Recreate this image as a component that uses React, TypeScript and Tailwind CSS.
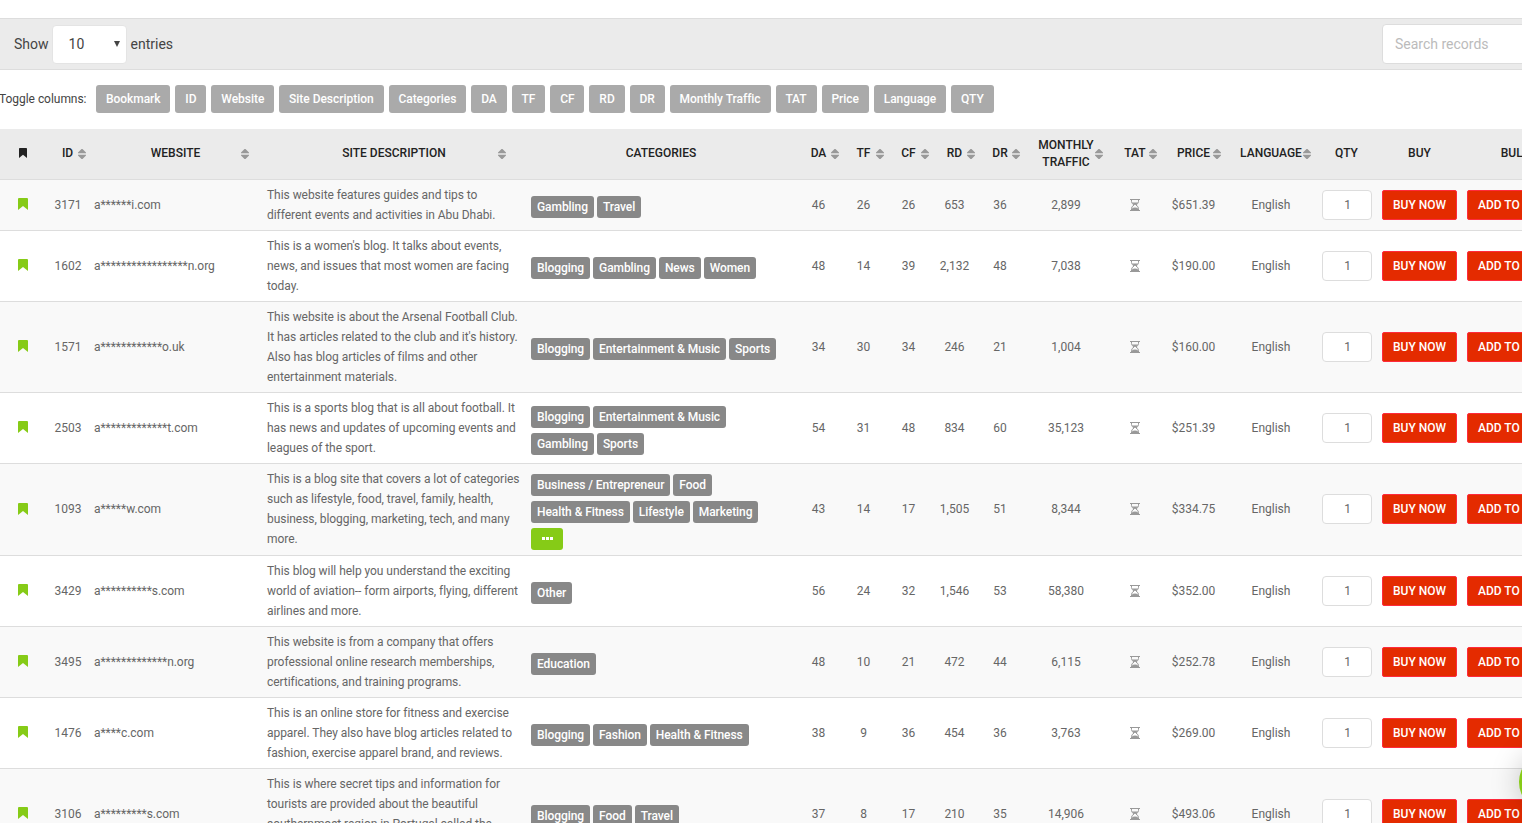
import React from 'react';

type Column = {
  label: string;
  width: string;
  sort?: string;
};

type Listing = {
  id: string;
  site: string;
  description: string[];
  tags: string[][];
  more?: boolean;
  stats: string[];
  price: string;
};

const toggles = ['Bookmark', 'ID', 'Website', 'Site Description', 'Categories', 'DA', 'TF', 'CF', 'RD', 'DR', 'Monthly Traffic', 'TAT', 'Price', 'Language', 'QTY'];

const columns: Column[] = [
  { label: 'ID', width: 'w-[43px]', sort: 'right-[3px]' },
  { label: 'WEBSITE', width: 'w-[173px]', sort: 'right-[13px]' },
  { label: 'SITE DESCRIPTION', width: 'w-[264px]', sort: 'right-[20px]' },
  { label: 'CATEGORIES', width: 'w-[270px]' },
  { label: 'DA', width: 'w-[45px]', sort: 'right-[2px]' },
  { label: 'TF', width: 'w-[45px]', sort: 'right-[2px]' },
  { label: 'CF', width: 'w-[45px]', sort: 'right-[2px]' },
  { label: 'RD', width: 'w-[47px]', sort: 'right-[3px]' },
  { label: 'DR', width: 'w-[44px]', sort: 'right-[2px]' },
  { label: 'MONTHLY TRAFFIC', width: 'w-[88px]', sort: 'right-[7px]' },
  { label: 'TAT', width: 'w-[50px]', sort: 'right-[3px]' },
  { label: 'PRICE', width: 'w-[67px]', sort: 'right-[6px]' },
  { label: 'LANGUAGE', width: 'w-[88px]', sort: 'right-[4px]' },
  { label: 'QTY', width: 'w-[63px]' },
  { label: 'BUY', width: 'w-[83px]' },
  { label: 'BULK', width: 'w-[109px]' },
];

const listings: Listing[] = [
  {
    id: '3171',
    site: 'a******i.com',
    description: ['This website features guides and tips to', 'different events and activities in Abu Dhabi.'],
    tags: [['Gambling', 'Travel']],
    stats: ['46', '26', '26', '653', '36', '2,899'],
    price: '$651.39',
  },
  {
    id: '1602',
    site: 'a*****************n.org',
    description: ["This is a women's blog. It talks about events,", 'news, and issues that most women are facing', 'today.'],
    tags: [['Blogging', 'Gambling', 'News', 'Women']],
    stats: ['48', '14', '39', '2,132', '48', '7,038'],
    price: '$190.00',
  },
  {
    id: '1571',
    site: 'a************o.uk',
    description: ['This website is about the Arsenal Football Club.', "It has articles related to the club and it's history.", 'Also has blog articles of films and other', 'entertainment materials.'],
    tags: [['Blogging', 'Entertainment & Music', 'Sports']],
    stats: ['34', '30', '34', '246', '21', '1,004'],
    price: '$160.00',
  },
  {
    id: '2503',
    site: 'a*************t.com',
    description: ['This is a sports blog that is all about football. It', 'has news and updates of upcoming events and', 'leagues of the sport.'],
    tags: [['Blogging', 'Entertainment & Music'], ['Gambling', 'Sports']],
    stats: ['54', '31', '48', '834', '60', '35,123'],
    price: '$251.39',
  },
  {
    id: '1093',
    site: 'a*****w.com',
    description: ['This is a blog site that covers a lot of categories', 'such as lifestyle, food, travel, family, health,', 'business, blogging, marketing, tech, and many', 'more.'],
    tags: [['Business / Entrepreneur', 'Food'], ['Health & Fitness', 'Lifestyle', 'Marketing']],
    more: true,
    stats: ['43', '14', '17', '1,505', '51', '8,344'],
    price: '$334.75',
  },
  {
    id: '3429',
    site: 'a**********s.com',
    description: ['This blog will help you understand the exciting', 'world of aviation-- form airports, flying, different', 'airlines and more.'],
    tags: [['Other']],
    stats: ['56', '24', '32', '1,546', '53', '58,380'],
    price: '$352.00',
  },
  {
    id: '3495',
    site: 'a*************n.org',
    description: ['This website is from a company that offers', 'professional online research memberships,', 'certifications, and training programs.'],
    tags: [['Education']],
    stats: ['48', '10', '21', '472', '44', '6,115'],
    price: '$252.78',
  },
  {
    id: '1476',
    site: 'a****c.com',
    description: ['This is an online store for fitness and exercise', 'apparel. They also have blog articles related to', 'fashion, exercise apparel brand, and reviews.'],
    tags: [['Blogging', 'Fashion', 'Health & Fitness']],
    stats: ['38', '9', '36', '454', '36', '3,763'],
    price: '$269.00',
  },
  {
    id: '3106',
    site: 'a*********s.com',
    description: ['This is where secret tips and information for', 'tourists are provided about the beautiful', 'southernmost region in Portugal called the', 'Algarve.'],
    tags: [['Blogging', 'Food', 'Travel']],
    stats: ['37', '8', '17', '210', '35', '14,906'],
    price: '$493.06',
  },
];

const BookmarkIcon: React.FC<{ className: string }> = ({ className }) => (
  <svg viewBox="0 0 10 12" className={className} fill="currentColor" preserveAspectRatio="none">
    <path d="M1 0h8q1 0 1 1v11L5 8 0 12V1q0-1 1-1z" />
  </svg>
);

const SortIcon: React.FC<{ className: string }> = ({ className }) => (
  <svg viewBox="0 0 8 10" className={`absolute top-5 h-[10px] w-2 fill-[#999] ${className}`}>
    <path d="M3.5 0h1L8 3.6v.7H0v-.7zM3.5 10h1L8 6.4v-.7H0v.7z" />
  </svg>
);

const HourglassIcon = () => (
  <svg viewBox="0 0 10 12" className="mx-auto h-3 w-[10px]" fill="none" stroke="#999">
    <path d="M0 .5h10M0 11.5h10" />
    <path d="M1.5 1v1.5Q1.5 4.5 4 6 1.5 7.5 1.5 9.5V11M8.5 1v1.5Q8.5 4.5 6 6q2.5 1.500 2.500 3.500V11" />
    <path d="M2 3.500h6L5.500 6h-1zM2 11V9.500Q3 8.500 5 8.500t3 1V11z" fill="#999" stroke="none" />
  </svg>
);

const Row: React.FC<{ item: Listing }> = ({ item }) => (
  <tr className="border-t border-[#ddd] odd:bg-[#f9f9f9] even:bg-white">
    <td>
      <BookmarkIcon className="mx-auto mb-px h-3 w-[10px] text-[#86cb17]" />
    </td>
    <td className="pl-px text-center">{item.id}</td>
    <td className="pl-[5px] tracking-[-0.04px]">{item.site}</td>
    <td className="py-[5px] pl-[5px] tracking-[-0.045px] whitespace-nowrap">
      {item.description.map(line => <div key={line}>{line}</div>)}
    </td>
    <td className="py-[5px] pl-[5px]">
      {item.tags.map((group, i) => (
        <div key={i} className="mt-[5px] flex gap-[3px]">
          {group.map(tag => (
            <span key={tag} className="h-[22px] rounded-[3px] bg-[#888] px-[6px] leading-[22px] font-medium tracking-[-0.07px] whitespace-nowrap text-white">{tag}</span>
          ))}
        </div>
      ))}
      {item.more && (
        <button className="mt-[5px] flex h-[22px] w-8 items-center justify-center gap-px rounded-[3px] bg-[#86cb17]">
          <span className="size-[3px] bg-white" />
          <span className="size-[3px] bg-white" />
          <span className="size-[3px] bg-white" />
        </button>
      )}
    </td>
    {item.stats.map((value, i) => <td key={i} className="text-center">{value}</td>)}
    <td><HourglassIcon /></td>
    <td className="text-center">{item.price}</td>
    <td className="text-center">English</td>
    <td>
      <input defaultValue="1" className="ml-[7px] block h-[30px] w-[50px] rounded-[4px] border border-[#ddd] bg-white pl-px text-center" />
    </td>
    <td>
      <button className="ml-1 block h-[30px] w-[75px] rounded-[2px] border border-[#ff2a3c] bg-[#e42b00] font-medium whitespace-nowrap text-white">BUY NOW</button>
    </td>
    <td>
      <button className="ml-[6px] block h-[30px] w-[97px] rounded-[2px] border border-[#ff2a3c] bg-[#e42b00] font-medium whitespace-nowrap text-white">ADD TO CART</button>
    </td>
  </tr>
);

export default function App() {
  return (
    <div className="relative h-[823px] w-full overflow-hidden bg-white pt-[18px] font-['Roboto',sans-serif] text-[12px] text-[#666]">
      <div className="flex h-[52px] w-[1600px] items-center border-y border-[#ddd] bg-[#ebebeb] pl-[14px] text-[14px] text-[#444]">
        <span>Show</span>
        <div className="mr-1 ml-[3px] flex h-[39px] w-[75px] items-center justify-between rounded-[4px] border border-[#e4e4e4] bg-white pr-[6px] pl-4">
          <span>10</span>
          <svg viewBox="0 0 6 6" className="h-[6px] w-[6px] fill-[#444]"><path d="M0 0h6L3 6z" /></svg>
        </div>
        <span>entries</span>
        <input placeholder="Search records" className="ml-auto h-10 w-[218px] rounded-[4px] border border-[#ddd] bg-white px-3 placeholder:text-[#bbb]" />
      </div>

      <div className="mt-[15px] mb-4 flex h-7 items-center gap-[5px] whitespace-nowrap">
        <span className="mr-1 -ml-px w-[88px] tracking-[-0.04px] text-[#444]">Toggle columns:</span>
        {toggles.map(name => (
          <button key={name} className="h-7 rounded-[3px] bg-[#aaa] px-[9.9px] font-medium tracking-[-0.03px] text-white">{name}</button>
        ))}
      </div>

      <table className="w-[1569px] table-fixed border-collapse leading-5">
        <thead>
          <tr className="h-[50px] bg-[#ebebeb] leading-[17px] text-[#222]">
            <th className="w-[46px]">
              <BookmarkIcon className="mx-auto mb-px h-[10px] w-[8px]" />
            </th>
            {columns.map(col => (
              <th key={col.label} className={`relative text-center font-medium ${col.width}`}>
                {col.label}
                {col.sort && <SortIcon className={col.sort} />}
              </th>
            ))}
          </tr>
        </thead>
        <tbody>
          {listings.map(item => <Row key={item.id} item={item} />)}
        </tbody>
      </table>

      {/* chat bubble, mostly off the right edge */}
      <div className="absolute top-[752px] left-[1519px] size-[60px] rounded-full bg-[#86cb17] shadow-[0_1px_30px_rgba(0,0,0,0.22)]" />
    </div>
  );
}
